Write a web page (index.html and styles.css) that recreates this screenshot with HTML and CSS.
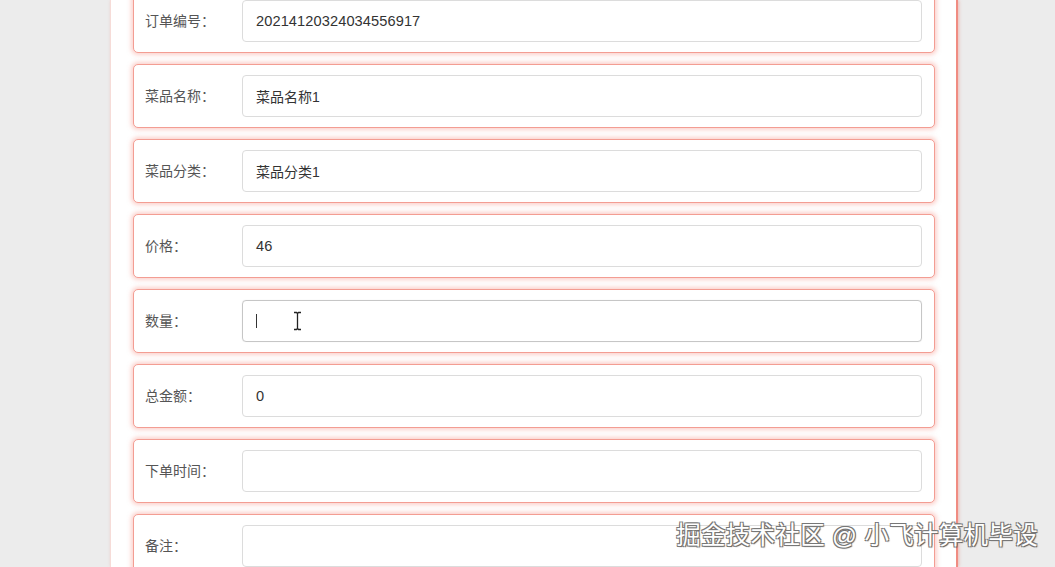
FILE: index.html
```html
<!DOCTYPE html>
<html lang="zh-CN">
<head>
	<meta charset="UTF-8">
	<title>订单详情</title>
	<link rel="stylesheet" href="styles.css">
</head>
<body>
	<div class="page">
		<div class="form">
			<div class="row">
				<span class="label">订单编号：</span>
				<div class="field num">20214120324034556917</div>
			</div>
			<div class="row">
				<span class="label">菜品名称：</span>
				<div class="field">菜品名称1</div>
			</div>
			<div class="row">
				<span class="label">菜品分类：</span>
				<div class="field">菜品分类1</div>
			</div>
			<div class="row">
				<span class="label">价格：</span>
				<div class="field num">46</div>
			</div>
			<div class="row">
				<span class="label">数量：</span>
				<div class="field focus">
					<span class="caret"></span>
					<svg class="ibeam" width="9" height="20" viewBox="0 0 9 20">
						<path d="M1 1.5h2.5l1 1 1-1H8M4.5 2.5v15M1 18.5h2.5l1-1 1 1H8" fill="none" stroke="#222" stroke-width="1.3"/>
					</svg>
				</div>
			</div>
			<div class="row">
				<span class="label">总金额：</span>
				<div class="field num">0</div>
			</div>
			<div class="row">
				<span class="label">下单时间：</span>
				<div class="field"></div>
			</div>
			<div class="row">
				<span class="label">备注：</span>
				<div class="field"></div>
			</div>
		</div>
	</div>
	<div class="watermark">掘金技术社区 @ 小飞计算机毕设</div>
</body>
</html>
```

FILE: styles.css
```css
*{
	padding: 0;
	margin: 0;
	box-sizing: border-box;
}
html,body{
	height: 100%;
	overflow: hidden;
}
body{
	background: #ececec;
	font-family: "Liberation Sans", "Noto Sans CJK SC", sans-serif;
	position: relative;
}
.page{
	display: flow-root;
	margin-left: 110px;
	width: 848px;
	height: 100%;
	background: #fff;
	border-left: 1px solid #f6dcd8;
	border-right: 2px solid #f08c82;
	box-shadow: 1px 0 3px rgba(240, 140, 130, .5);
	padding-left: 22px;
}
.form{
	width: 802px;
	margin-top: -11px;
	display: flex;
	flex-direction: column;
	gap: 11px;
}
.row{
	height: 64px;
	display: flex;
	align-items: center;
	padding: 0 12px 0 11px;
	border: 1px solid #f39d93;
	border-radius: 5px;
	box-shadow: 0 0 4px 2px rgba(250, 165, 155, .5);
	background: #fff;
}
.label{
	width: 97px;
	flex-shrink: 0;
	font-size: 14px;
	color: #555;
	padding-bottom: 3px;
}
.field{
	flex: 1;
	height: 42px;
	display: flex;
	align-items: center;
	padding-left: 13px;
	padding-bottom: 1px;
	border: 1px solid #dcdcdc;
	border-radius: 4px;
	font-size: 14px;
	color: #333;
	position: relative;
}
.field.num{
	font-size: 14.6px;
	letter-spacing: .1px;
}
.field.focus{
	border-color: #c6c6c6;
	box-shadow: 0 0 1px rgba(0, 0, 0, .15);
}
.caret{
	display: block;
	width: 1px;
	height: 14px;
	background: #333;
}
.ibeam{
	position: absolute;
	left: 50px;
	top: 10px;
}
.watermark{
	position: absolute;
	right: 17px;
	bottom: 16px;
	font-size: 24.5px;
	color: #fff;
	letter-spacing: .3px;
	text-shadow: -1px -1px 0 #777, 1px -1px 0 #777, -1px 1px 0 #777, 1px 1px 1px #555;
}
```
